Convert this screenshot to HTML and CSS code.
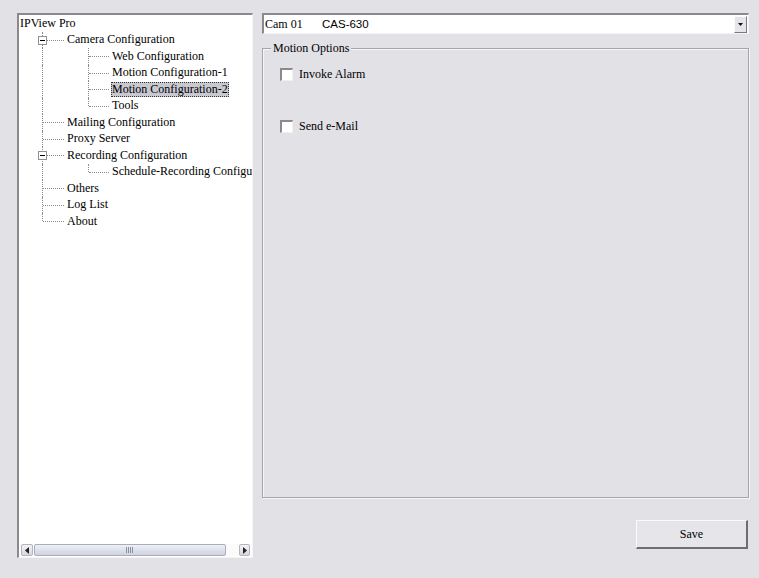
FILE: index.html
```html
<!DOCTYPE html>
<html>
<head>
<meta charset="utf-8">
<link rel="stylesheet" href="styles.css">
</head>
<body>
<div class="app">
  <div class="tree-panel">
    <div class="tree">
      <div class="row"><span class="label root">IPView Pro</span></div>
      <div class="row"><span class="ind"></span><span class="conn"><span class="exp"></span></span><span class="label">Camera Configuration</span></div>
      <div class="row"><span class="ind"></span><span class="guide"></span><span class="conn c2"></span><span class="label">Web Configuration</span></div>
      <div class="row"><span class="ind"></span><span class="guide"></span><span class="conn c2"></span><span class="label">Motion Configuration-1</span></div>
      <div class="row"><span class="ind"></span><span class="guide"></span><span class="conn c2"></span><span class="label selected">Motion Configuration-2</span></div>
      <div class="row"><span class="ind"></span><span class="guide"></span><span class="conn c2 last"></span><span class="label">Tools</span></div>
      <div class="row"><span class="ind"></span><span class="conn"></span><span class="label">Mailing Configuration</span></div>
      <div class="row"><span class="ind"></span><span class="conn"></span><span class="label">Proxy Server</span></div>
      <div class="row"><span class="ind"></span><span class="conn"><span class="exp"></span></span><span class="label">Recording Configuration</span></div>
      <div class="row"><span class="ind"></span><span class="guide"></span><span class="conn c2 last"></span><span class="label">Schedule-Recording Configuration</span></div>
      <div class="row"><span class="ind"></span><span class="conn"></span><span class="label">Others</span></div>
      <div class="row"><span class="ind"></span><span class="conn"></span><span class="label">Log List</span></div>
      <div class="row"><span class="ind"></span><span class="conn last"></span><span class="label">About</span></div>
    </div>
    <div class="hscroll">
      <div class="sb-btn"><svg width="5" height="7" viewBox="0 0 5 7"><path d="M4 0 L0 3.5 L4 7 Z" fill="#222"/></svg></div>
      <div class="sb-track">
        <div class="sb-thumb"><span class="grip"></span></div>
      </div>
      <div class="sb-btn"><svg width="5" height="7" viewBox="0 0 5 7"><path d="M1 0 L5 3.5 L1 7 Z" fill="#222"/></svg></div>
    </div>
  </div>
  <div class="main">
    <div class="combo">
      <span class="cam">Cam 01</span><span class="model">CAS-630</span>
      <div class="combo-btn"><svg width="5" height="3" viewBox="0 0 5 3"><path d="M0 0 H5 L2.5 3 Z" fill="#111"/></svg></div>
    </div>
    <div class="group">
      <span class="group-label">Motion Options</span>
      <div class="check"><span class="box"></span><span>Invoke Alarm</span></div>
      <div class="check"><span class="box"></span><span>Send e-Mail</span></div>
    </div>
    <div class="actions"><button class="save">Save</button></div>
  </div>
</div>
</body>
</html>
```

FILE: styles.css
```css
html, body {
  margin: 0;
  padding: 0;
  background: #e2e1e6;
  font-family: "Liberation Serif", "Times New Roman", serif;
  font-size: 12px;
  color: #000;
}

.app {
  display: flex;
  gap: 9px;
  padding: 13px 0 0 17px;
}

.tree-panel {
  width: 236px;
  height: 545px;
  box-sizing: border-box;
  background: #fff;
  border-style: solid;
  border-width: 2px 1px 1px 2px;
  border-color: #8a8a8e #f4f4f6 #f4f4f6 #8a8a8e;
  display: flex;
  flex-direction: column;
}

.tree {
  flex: 1;
  overflow: hidden;
}

.row {
  height: 16.5px;
  display: flex;
  align-items: center;
  white-space: nowrap;
}

.ind {
  flex: none;
  width: 23px;
  height: 100%;
}

.guide {
  flex: none;
  width: 45px;
  height: 100%;
  border-left: 1px dotted #8a8a8a;
}

.conn {
  flex: none;
  width: 22px;
  height: 100%;
  position: relative;
}

.conn.c2 {
  width: 21px;
}

.conn::before {
  content: "";
  position: absolute;
  left: 0;
  top: 0;
  bottom: 0;
  border-left: 1px dotted #8a8a8a;
}

.conn.last::before {
  bottom: 50%;
}

.conn::after {
  content: "";
  position: absolute;
  left: 1px;
  right: 0;
  top: 50%;
  border-top: 1px dotted #8a8a8a;
}

.exp {
  position: absolute;
  left: -4px;
  top: 4px;
  width: 7px;
  height: 7px;
  border: 1px solid #909090;
  background: #fff;
  z-index: 1;
}

.exp::after {
  content: "";
  position: absolute;
  left: 1px;
  right: 1px;
  top: 3px;
  height: 1px;
  background: #000;
}

.label {
  margin-left: 2px;
  padding: 0 1px;
  line-height: 15px;
}

.label.root {
  margin-left: 0;
}

.label.selected {
  background: #c8c8d0;
  outline: 1px dotted #333;
  outline-offset: -1px;
}

.hscroll {
  flex: none;
  height: 12px;
  margin: 0 1px 1px 1px;
  display: flex;
  align-items: stretch;
  background: #fbfbfb;
}

.sb-btn {
  flex: none;
  width: 11px;
  margin: 0 1px;
  border: 1px solid #b4b4bc;
  border-radius: 2px;
  box-sizing: border-box;
  background: linear-gradient(#f2f2f6, #d8d8e0);
  display: flex;
  align-items: center;
  justify-content: center;
}

.sb-btn:first-child {
  width: 12px;
}

.sb-track {
  flex: 1;
  display: flex;
  padding-right: 12px;
}

.sb-thumb {
  flex: 1;
  border: 1px solid #a8acbc;
  border-radius: 2px;
  background: linear-gradient(#eef0f6, #cfd3de);
  display: flex;
  align-items: center;
  justify-content: center;
}

.grip {
  width: 8px;
  height: 6px;
  background: repeating-linear-gradient(90deg, #8a90a4 0 1px, transparent 1px 2px);
}

.main {
  width: 487px;
  display: flex;
  flex-direction: column;
}

.combo {
  height: 21px;
  box-sizing: border-box;
  background: #fff;
  border-style: solid;
  border-width: 2px 1px 1px 2px;
  border-color: #8a8a8e #f4f4f6 #f4f4f6 #8a8a8e;
  display: flex;
  align-items: center;
  padding-left: 1px;
  position: relative;
}

.cam {
  width: 57px;
}

.model {
  font-family: "Liberation Sans", Arial, sans-serif;
  font-size: 11.5px;
}

.combo-btn {
  margin-left: auto;
  width: 13px;
  height: 17px;
  box-sizing: border-box;
  border-style: solid;
  border-width: 1px;
  border-color: #fafafa #7a7a7e #7a7a7e #fafafa;
  background: #e6e5ea;
  display: flex;
  align-items: center;
  justify-content: center;
  margin-right: 1px;
}

.group {
  margin-top: 14px;
  height: 450px;
  box-sizing: border-box;
  border: 1px solid #a6a6aa;
  box-shadow: 1px 1px 0 #f6f6f8, inset 1px 1px 0 #f6f6f8;
  position: relative;
  padding: 19px 0 0 17px;
  display: flex;
  flex-direction: column;
  gap: 39px;
}

.group-label {
  position: absolute;
  top: -9px;
  left: 8px;
  padding: 0 2px;
  background: #e2e1e6;
  line-height: 16px;
}

.check {
  display: flex;
  align-items: center;
  gap: 6px;
  height: 13px;
}

.box {
  width: 13px;
  height: 13px;
  box-sizing: border-box;
  background: #fff;
  border-style: solid;
  border-width: 2px 1px 1px 2px;
  border-color: #8a8a8e #f0f0f2 #f0f0f2 #8a8a8e;
}

.actions {
  display: flex;
  justify-content: flex-end;
  margin-top: 22px;
  padding-right: 1px;
}

.save {
  width: 112px;
  height: 29px;
  box-sizing: border-box;
  background: #e6e5ea;
  border-style: solid;
  border-width: 1px 2px 2px 1px;
  border-color: #fafafa #6e6e72 #6e6e72 #fafafa;
  font-family: "Liberation Serif", "Times New Roman", serif;
  font-size: 12px;
  color: #000;
  padding: 0;
}
```
